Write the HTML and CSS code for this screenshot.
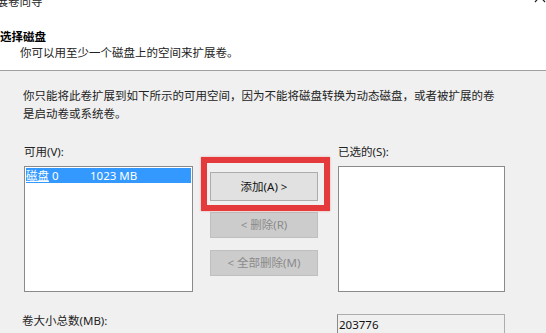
FILE: index.html
```html
<!DOCTYPE html>
<html lang="zh-CN">
<head>
<meta charset="utf-8">
<title>扩展卷向导</title>
<link rel="stylesheet" href="styles.css">
</head>
<body>
<div class="window">
  <header class="head">
    <div class="title">扩展卷向导</div>
    <svg class="close" width="12" height="10" viewBox="0 0 12 10"><path d="M1 -3 L11 8 M11 -3 L1 8" stroke="#222" stroke-width="1.2" fill="none"/></svg>
    <div class="heading">选择磁盘</div>
    <div class="sub">你可以用至少一个磁盘上的空间来扩展卷。</div>
  </header>
  <main class="body">
    <p class="info">你只能将此卷扩展到如下所示的可用空间，因为不能将磁盘转换为动态磁盘，或者被扩展的卷是启动卷或系统卷。</p>
    <div class="pick">
      <div class="col col-left">
        <div class="label">可用(V):</div>
        <div class="list">
          <div class="item selected"><span class="disk"><u>磁盘</u> 0</span><span>1023 MB</span></div>
        </div>
      </div>
      <div class="col col-mid">
        <div class="btn-wrap highlight"><button class="btn btn-main">添加(A) &gt;</button></div>
        <button class="btn btn-off" disabled>&lt; 删除(R)</button>
        <button class="btn btn-off btn-last" disabled>&lt; 全部删除(M)</button>
      </div>
      <div class="col col-right">
        <div class="label">已选的(S):</div>
        <div class="list"></div>
      </div>
    </div>
    <div class="total">
      <div class="total-label">卷大小总数(MB):</div>
      <div class="field">203776</div>
    </div>
  </main>
</div>
</body>
</html>
```
FILE: styles.css
```css
html, body {
  margin: 0;
  padding: 0;
}
body {
  width: 546px;
  height: 333px;
  overflow: hidden;
  background: #f0f0f0;
  font-family: "Noto Sans", "Noto Sans CJK SC", sans-serif;
  font-size: 11.5px;
  line-height: 16px;
  color: #111;
}
.window {
  position: relative;
}
.head {
  position: relative;
  background: #fff;
  height: 76px;
  border-bottom: 1px solid #a0a0a0;
}
.title {
  margin-top: -6px;
  margin-left: -15px;
  height: 16px;
  color: #222;
}
.close {
  position: absolute;
  right: 0;
  top: 0;
}
.heading {
  margin-top: 19px;
  font-weight: bold;
  color: #000;
}
.sub {
  padding-left: 20px;
  color: #222;
}
.body {
  padding-left: 23px;
}
.info {
  margin: 16px 0 0;
  width: 478px;
  line-height: 18px;
  color: #222;
}
.pick {
  display: flex;
  margin-top: 21px;
}
.col-left {
  width: 169px;
  margin-left: 1px;
}
.col-right {
  width: 167px;
  margin-left: 20px;
}
.col-mid {
  width: 108px;
  margin-left: 17px;
  padding-top: 28px;
  display: flex;
  flex-direction: column;
}
.label {
  height: 16px;
  color: #222;
}
.list {
  margin-top: 6px;
  height: 122px;
  border: 1px solid #8a8a8a;
  background: #fff;
  padding: 1px;
}
.item {
  height: 15px;
  line-height: 15px;
  display: flex;
}
.selected {
  background: #3399ff;
  color: #fff;
}
.disk {
  width: 64px;
}
.btn {
  font: inherit;
  width: 108px;
  height: 26px;
  margin: 0;
  padding: 0;
  border: 1px solid #adadad;
  background: #e1e1e1;
  color: #111;
}
.btn-wrap {
  position: relative;
}
.btn-main {
  height: 29px;
  display: block;
}
.highlight::after {
  content: "";
  position: absolute;
  left: -9px;
  right: -12px;
  top: -15px;
  bottom: -10px;
  border: 6px solid #e53a3c;
  box-shadow: 0 0 2px rgba(229, 58, 60, 0.4);
}
.btn-off {
  margin-top: 11px;
  background: #cccccc;
  border-color: #bfbfbf;
  color: #8a8a8a;
}
.btn-last {
  margin-top: 12px;
}
.total {
  display: flex;
  margin-top: 21px;
}
.total-label {
  width: 315px;
  margin-left: -1px;
  color: #222;
}
.field {
  margin-top: 1px;
  width: 165px;
  height: 20px;
  line-height: 20px;
  border: 1px solid #adadad;
  border-left-color: #8a8a8a;
  padding-left: 1px;
  background: #f0f0f0;
  color: #111;
}
```
